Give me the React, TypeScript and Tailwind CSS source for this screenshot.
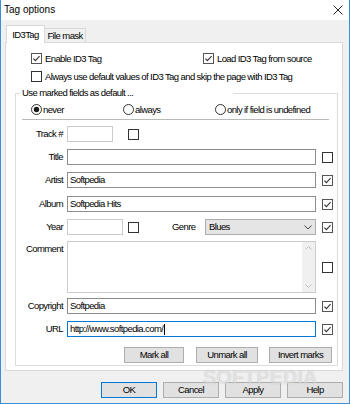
import React from 'react';

function Box({ checked = false }: { checked?: boolean }) {
  return (
    <svg width="11" height="11" viewBox="0 0 11 11" className="block shrink-0">
      <rect x="0.5" y="0.5" width="10" height="10" fill="white" stroke={checked ? '#555555' : '#333333'} />
      {checked && <path d="M2.4 5.6 L4.4 7.6 L8.6 3.2" fill="none" stroke="#333333" strokeWidth="1.1" />}
    </svg>
  );
}

function Radio({ on = false }: { on?: boolean }) {
  return (
    <svg width="11" height="11" viewBox="0 0 11 11" className="block shrink-0">
      <circle cx="5.5" cy="5.5" r="5" fill="white" stroke="#333333" />
      {on && <circle cx="5.5" cy="5.5" r="2.7" fill="#1a1a1a" />}
    </svg>
  );
}

function Field({ label, children, className = '' }: { label: string; children: React.ReactNode; className?: string }) {
  return (
    <div className={'flex items-center h-[16px] ' + className}>
      <span className="w-[47px] text-right shrink-0">{label}</span>
      <div className="ml-[4px] flex items-center">{children}</div>
    </div>
  );
}

function Btn({ label, className = '' }: { label: string; className?: string }) {
  return (
    <div className={'h-[16px] flex items-center justify-center border bg-[#e1e1e1] ' + className}>
      {label}
    </div>
  );
}

export default function App() {
  return (
    <div className="relative w-[350px] h-[404px] overflow-hidden flex flex-col border-x border-b border-[#3a8fd9] bg-[#f0f0f0] text-black text-[9.5px] leading-[12px] tracking-[-0.6px] font-['Liberation_Sans',Arial,sans-serif]">
      {/* Title bar */}
      <div className="h-[20px] shrink-0 bg-white flex items-center pl-[3px] pr-[6px]">
        <span className="text-[10px] tracking-normal">Tag options</span>
        <svg className="ml-auto block" width="10" height="10" viewBox="0 0 10 10">
          <path d="M0.5 0.5 L9.5 9.5 M9.5 0.5 L0.5 9.5" stroke="#222222" strokeWidth="1" />
        </svg>
      </div>

      <div className="flex-1 flex flex-col pl-[4px] pr-[6px] pt-[5px]">
        {/* Tabs */}
        <div className="h-[17px] flex items-end pl-[1px]">
          <div className="relative z-10 h-[18px] w-[39px] -mb-[1px] flex items-center justify-center bg-white border border-b-0 border-[#d9d9d9]">
            ID3Tag
          </div>
          <div className="h-[14px] w-[41px] flex items-center justify-center whitespace-nowrap bg-[#f0f0f0] border border-l-0 border-b-0 border-[#d9d9d9]">
            File mask
          </div>
        </div>

        {/* Tab panel */}
        <div className="h-[329px] bg-white border border-[#d9d9d9] pt-[9px] flex flex-col">
          <div className="h-[13px] flex items-center pl-[25px]">
            <div className="w-[172px] flex items-center gap-[3px]">
              <Box checked />
              <span>Enable ID3 Tag</span>
            </div>
            <div className="flex items-center gap-[3px]">
              <Box checked />
              <span>Load ID3 Tag from source</span>
            </div>
          </div>
          <div className="h-[13px] mt-[5px] flex items-center gap-[3px] pl-[25px] whitespace-nowrap">
            <Box />
            <span>Always use default values of ID3 Tag and skip the page with ID3 Tag</span>
          </div>

          <fieldset className="mt-[4px] ml-[9px] w-[323px] border border-[#dcdcdc] pb-[2px]">
            <legend className="w-[213px] ml-[4px] pl-[2px] leading-[12px] bg-white">Use marked fields as default ...</legend>
            <div className="flex flex-col pt-[4px]">
              <div className="h-[13px] flex items-center pl-[15px]">
                <div className="w-[92px] flex items-center gap-[1px]">
                  <Radio on />
                  <span>never</span>
                </div>
                <div className="w-[92px] flex items-center gap-[1px]">
                  <Radio />
                  <span>always</span>
                </div>
                <div className="flex items-center gap-[1px]">
                  <Radio />
                  <span>only if field is undefined</span>
                </div>
              </div>
              <div className="mt-[3px] ml-[6px] mr-[8px] h-px bg-[#b9b9b9]" />

              <Field label="Track #" className="mt-[6px]">
                <div className="w-[46px] h-[16px] border border-[#cccccc] bg-white" />
                <div className="ml-[15px]"><Box /></div>
              </Field>
              <Field label="Title" className="mt-[7px]">
                <div className="w-[249px] h-[16px] border border-[#8c8c8c] bg-white" />
                <div className="ml-[6px]"><Box /></div>
              </Field>
              <Field label="Artist" className="mt-[7px]">
                <div className="w-[249px] h-[16px] border border-[#8c8c8c] bg-white pl-[2px] flex items-center">Softpedia</div>
                <div className="ml-[6px]"><Box checked /></div>
              </Field>
              <Field label="Album" className="mt-[8px]">
                <div className="w-[249px] h-[16px] border border-[#8c8c8c] bg-white pl-[2px] flex items-center">Softpedia Hits</div>
                <div className="ml-[6px]"><Box checked /></div>
              </Field>
              <Field label="Year" className="mt-[7px]">
                <div className="w-[56px] h-[16px] border border-[#cccccc] bg-white" />
                <div className="ml-[5px]"><Box /></div>
                <span className="ml-[33px] w-[33px]">Genre</span>
                <div className="w-[111px] h-[16px] border border-[#adadad] bg-[#e5e5e5] pl-[3px] pr-[3px] flex items-center">
                  <span>Blues</span>
                  <svg className="ml-auto block" width="8" height="5" viewBox="0 0 8 5">
                    <path d="M0.5 0.5 L4 4 L7.5 0.5" fill="none" stroke="#444444" strokeWidth="1" />
                  </svg>
                </div>
                <div className="ml-[6px]"><Box checked /></div>
              </Field>

              <div className="mt-[6px] h-[52px] flex">
                <span className="w-[47px] text-right shrink-0 pt-[2px]">Comment</span>
                <div className="ml-[4px] w-[249px] h-[52px] border border-[#cccccc] bg-white flex justify-end">
                  <div className="w-[13px] bg-[#f0f0f0] flex flex-col items-center justify-between py-[4px]">
                    <svg className="block" width="7" height="4" viewBox="0 0 7 4">
                      <path d="M0.5 3.5 L3.5 0.5 L6.5 3.5" fill="none" stroke="#bfbfbf" strokeWidth="1" />
                    </svg>
                    <svg className="block" width="7" height="4" viewBox="0 0 7 4">
                      <path d="M0.5 0.5 L3.5 3.5 L6.5 0.5" fill="none" stroke="#bfbfbf" strokeWidth="1" />
                    </svg>
                  </div>
                </div>
                <div className="ml-[6px] self-center"><Box /></div>
              </div>

              <Field label="Copyright" className="mt-[5px]">
                <div className="w-[249px] h-[16px] border border-[#8c8c8c] bg-white pl-[2px] flex items-center">Softpedia</div>
                <div className="ml-[6px]"><Box checked /></div>
              </Field>
              <Field label="URL" className="mt-[7px]">
                <div className="w-[249px] h-[16px] border border-[#0078d7] bg-white pl-[2px] flex items-center">
                  <span>http://www.softpedia.com/</span>
                  <span className="ml-[1px] w-px h-[11px] bg-black" />
                </div>
                <div className="ml-[6px]"><Box checked /></div>
              </Field>

              <div className="mt-[10px] flex justify-end pr-[5px]">
                <Btn label="Mark all" className="w-[60px] border-[#adadad]" />
                <Btn label="Unmark all" className="ml-[12px] w-[62px] border-[#adadad]" />
                <Btn label="Invert marks" className="ml-[11px] w-[63px] border-[#adadad]" />
              </div>
            </div>
          </fieldset>
        </div>

        {/* Dialog buttons */}
        <div className="mt-[11px] flex justify-end gap-[6px]">
          <Btn label="OK" className="w-[56px] border-[#0078d7]" />
          <Btn label="Cancel" className="w-[56px] border-[#adadad]" />
          <Btn label="Apply" className="w-[56px] border-[#adadad]" />
          <Btn label="Help" className="w-[56px] border-[#adadad]" />
        </div>
      </div>

      {/* watermark */}
      <div className="absolute left-[202px] top-[367px] pointer-events-none text-[20px] leading-[20px] tracking-normal font-bold text-white/50 [text-shadow:0_0_1px_rgba(0,0,0,0.2)]">
        SOFTPEDIA
      </div>
    </div>
  );
}
